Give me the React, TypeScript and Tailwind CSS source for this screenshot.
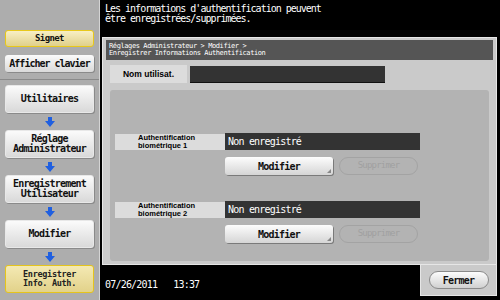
import React from "react";

const mono = { fontFamily: '"DejaVu Sans Mono", "Liberation Mono", monospace' };
const sans = { fontFamily: '"Liberation Sans", Arial, sans-serif' };

function Arrow() {
  return (
    <div className="flex h-[17px] items-center justify-center">
      <svg width="10" height="10" viewBox="0 0 10 10">
        <polygon points="3,0 7,0 7,4 10,4 5,10 0,4 3,4" fill="#1f5fe0" />
      </svg>
    </div>
  );
}

function NavButton({ children, yellow }: { children: React.ReactNode; yellow?: boolean }) {
  return (
    <div
      className={
        "flex h-[28px] flex-col items-center justify-center rounded-[3px] text-center leading-[10px] " +
        (yellow
          ? "border border-[#e5c41c] bg-gradient-to-b from-[#f4e9b3] to-[#e2d28a] text-[8.5px] font-bold text-[#222]"
          : "border border-[#e8e8e8] bg-gradient-to-b from-[#fbfbfb] to-[#d9d9d9] text-[10px] font-bold text-[#111] shadow-[1px_1px_0_#8a8a8a]")
      }
      style={{ ...mono, letterSpacing: yellow ? "-0.3px" : "-0.8px" }}
    >
      {children}
    </div>
  );
}

function AuthRow({ n }: { n: number }) {
  return (
    <div className="flex flex-col">
      <div className="flex items-center">
        <div
          className="flex h-[16px] w-[110px] flex-col justify-center bg-[#dcdcdc] pl-[23px] text-[7.5px] font-bold leading-[7.5px] text-black"
          style={sans}
        >
          <span>Authentification</span>
          <span>biométrique {n}</span>
        </div>
        <div
          className="flex h-[17px] w-[195px] items-center bg-[#333] pl-[3px] text-[10px] text-white"
          style={{ ...mono, letterSpacing: "-0.8px" }}
        >
          Non enregistré
        </div>
      </div>
      <div className="mt-[7px] flex items-center gap-[6px] pl-[110px]">
        <div
          className="relative flex h-[18px] w-[108px] items-center justify-center rounded-[3px] bg-gradient-to-b from-[#fdfdfd] to-[#d5d5d5] text-[10px] font-bold text-[#111] shadow-[1px_1px_0_#7a7a7a]"
          style={{ ...mono, letterSpacing: "-0.8px" }}
        >
          Modifier
          <span className="absolute bottom-[2px] right-[2px] h-0 w-0 border-b-[4px] border-l-[4px] border-b-[#888] border-l-transparent" />
        </div>
        <div
          className="flex h-[18px] w-[79px] items-center justify-center rounded-full border border-[#a3a3a3] text-[9px] text-[#a0a0a0]"
          style={{ ...mono, letterSpacing: "-0.8px" }}
        >
          Supprimer
        </div>
      </div>
    </div>
  );
}

export default function App() {
  return (
    <div className="flex h-[300px] w-[500px] overflow-hidden bg-black">
      <div className="flex w-[100px] flex-col border-r border-r-[#d4d4d4] bg-[#adadad]">
        <div className="flex h-[80px] flex-col gap-[8px] border-b border-b-[#8a8a8a] px-[5px] pt-[30px]">
          <div
            className="flex h-[17px] items-center justify-center rounded-[3px] border border-[#e8c81a] bg-gradient-to-b from-[#f8efc4] to-[#e0d08a] text-[9px] font-bold text-[#111]"
            style={{ ...mono, letterSpacing: "-0.6px" }}
          >
            Signet
          </div>
          <div
            className="flex h-[17px] items-center justify-center rounded-[3px] bg-gradient-to-b from-[#fbfbfb] to-[#dadada] text-[10px] font-bold text-[#111] shadow-[1px_1px_0_#8a8a8a]"
            style={{ ...mono, letterSpacing: "-1px" }}
          >
            Afficher clavier
          </div>
        </div>
        <div className="flex flex-col px-[5px] pt-[5px]">
          <NavButton>Utilitaires</NavButton>
          <Arrow />
          <NavButton>
            <span>Réglage</span>
            <span>Administrateur</span>
          </NavButton>
          <Arrow />
          <NavButton>
            <span>Enregistrement</span>
            <span>Utilisateur</span>
          </NavButton>
          <Arrow />
          <NavButton>Modifier</NavButton>
          <Arrow />
          <NavButton yellow>
            <span className="leading-[9px]">Enregistrer</span>
            <span className="leading-[9px]">Info. Auth.</span>
          </NavButton>
        </div>
      </div>

      <div className="flex flex-1 flex-col">
        <div
          className="flex h-[37px] flex-col pl-[5px] pt-[4px] text-[10px] leading-[10px] text-white"
          style={{ ...mono, letterSpacing: "-1px" }}
        >
          <span>Les informations d'authentification peuvent</span>
          <span>être enregistrées/supprimées.</span>
        </div>

        <div className="ml-[2px] mr-[3px] flex h-[228px] flex-col border border-[#e6e6e6] bg-[#cacaca] px-[3px] pt-[2px]">
          <div
            className="flex h-[20px] flex-col justify-center bg-[#555] pl-[3px] text-[7px] leading-[7px] text-white"
            style={{ ...mono, letterSpacing: "-0.4px" }}
          >
            <span>Réglages Administrateur &gt; Modifier &gt;</span>
            <span>Enregistrer Informations Authentification</span>
          </div>
          <div className="mt-[5px] flex items-center gap-[3px] pl-[4px]">
            <div
              className="flex h-[18px] w-[77px] items-center justify-center bg-[#dcdcdc] text-[8.5px] font-bold text-black"
              style={sans}
            >
              Nom utilisat.
            </div>
            <div className="h-[17px] w-[195px] border-b border-b-[#111] bg-[#333]" />
          </div>
          <div className="mx-[4px] mt-[7px] flex flex-1 flex-col gap-[26px] rounded-[3px] bg-[#b3b3b3] pl-[5px] pt-[43px]">
            <AuthRow n={1} />
            <AuthRow n={2} />
          </div>
          <div className="h-[3px]" />
        </div>

        <div className="flex flex-1">
          <div
            className="flex flex-1 items-center pl-[5px] pt-[4px] text-[10px] text-white"
            style={{ ...mono, letterSpacing: "-0.8px" }}
          >
            <span>07/26/2011</span>
            <span className="ml-[16px]">13:37</span>
          </div>
          <div className="mb-[4px] mr-[3px] flex w-[77px] items-center justify-center border-x border-b border-[#e6e6e6] bg-[#cacaca]">
            <div
              className="flex h-[18px] w-[60px] items-center justify-center rounded-full border border-[#8a8a8a] bg-gradient-to-b from-[#fdfdfd] to-[#d0d0d0] text-[10px] font-bold text-[#111]"
              style={{ ...mono, letterSpacing: "-0.8px" }}
            >
              Fermer
            </div>
          </div>
        </div>
      </div>
    </div>
  );
}
